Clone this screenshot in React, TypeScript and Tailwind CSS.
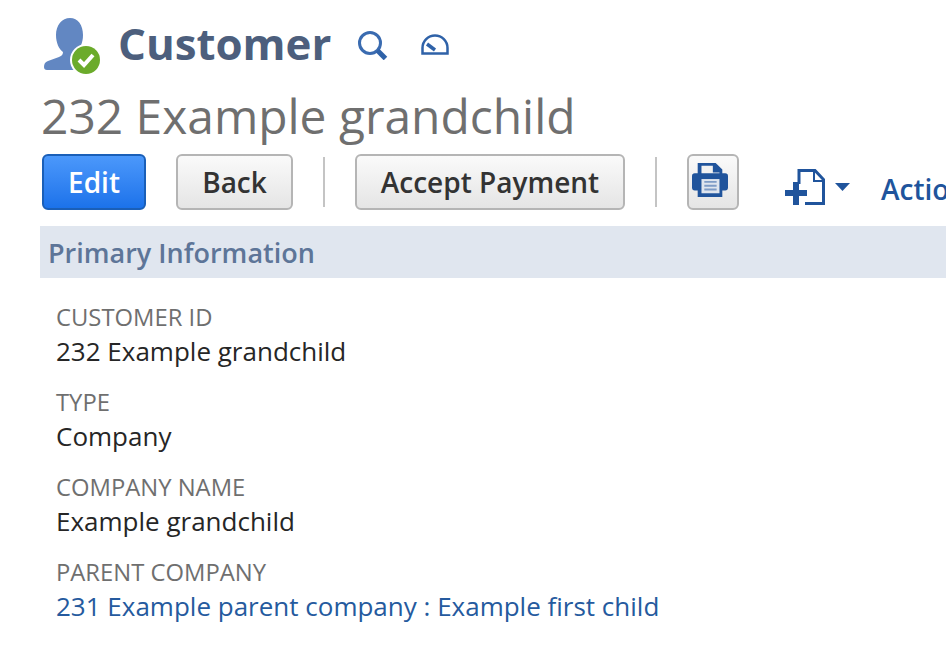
import type { ReactNode } from "react";

const fields: Array<{ label: string; value: string; link?: boolean }> = [
  { label: "CUSTOMER ID", value: "232 Example grandchild" },
  { label: "TYPE", value: "Company" },
  { label: "COMPANY NAME", value: "Example grandchild" },
  {
    label: "PARENT COMPANY",
    value: "231 Example parent company : Example first child",
    link: true,
  },
];

const CustomerIcon = () => (
  <svg width="60" height="60" viewBox="0 0 60 60" className="shrink-0">
    <path
      d="M2 53c0-3 1-5 4-6l11-4c3-1 4-3 4-5-4-3-7-9-7-17C14 11 20 4 28 4s13 7 13 17c0 8-3 14-7 17 0 3 2 4 6 6l8 4v8H5c-2 0-3-1-3-3z"
      fill="#6287c2"
    />
    <circle cx="44" cy="46" r="16" fill="#fff" />
    <circle cx="44" cy="46" r="14" fill="#6bab2b" />
    <path
      d="M37 46l5 5 9-10"
      fill="none"
      stroke="#fff"
      strokeWidth="4"
    />
  </svg>
);

const SearchIcon = () => (
  <svg width="32" height="32" viewBox="0 0 32 32">
    <circle cx="13" cy="15" r="10.500" fill="none" stroke="#3a6bb0" strokeWidth="3" />
    <path d="M20.500 22.500l8 8" stroke="#2f62a8" strokeWidth="5" />
  </svg>
);

const GaugeIcon = () => (
  <svg width="28" height="21" viewBox="0 0 28 21">
    <path
      d="M1.500 19.500V14a12.500 12.500 0 0 1 25 0v5.500z"
      fill="none"
      stroke="#2f62a8"
      strokeWidth="2.500"
    />
    <path d="M6 10l8 6" stroke="#2f62a8" strokeWidth="3.500" />
  </svg>
);

const PrinterIcon = () => (
  <svg width="38" height="36" viewBox="0 0 40 38">
    <path d="M7 1h19l7 7v10H7z" fill="#20549c" />
    <path d="M11 4h12v7h7v7H11z" fill="#f2f2f2" />
    <path d="M1 15q0-3 3-3h32q3 0 3 3v12q0 3-3 3h-3v7H7v-7H4q-3 0-3-3z" fill="#20549c" />
    <path d="M11 18h19v15H11z" fill="#dfe5ee" />
    <path d="M14 21h13M14 25h13M14 29h13" stroke="#7f9cc6" strokeWidth="2" />
  </svg>
);

const NewRecordIcon = () => (
  <svg width="66" height="36" viewBox="0 0 66 36">
    <path
      d="M14 15V1.500h16l8.500 9v24H20"
      fill="none"
      stroke="#20549c"
      strokeWidth="3"
    />
    <path d="M29 2v10h10" fill="none" stroke="#20549c" strokeWidth="2" />
    <path d="M0 24h22M11 13v23" stroke="#20549c" strokeWidth="6" />
    <path d="M50 14h15l-7.500 8z" fill="#20549c" />
  </svg>
);

const Button = ({ children, width }: { children: ReactNode; width: string }) => (
  <button
    className={`flex h-14 shrink-0 items-center justify-center rounded-md border-2 border-[#b5b5b5] bg-gradient-to-b from-[#fafafa] to-[#e5e5e5] text-[28px] font-semibold text-[#333] ${width}`}
  >
    {children}
  </button>
);

const Divider = () => (
  <div className="mx-[30px] h-[50px] w-0.5 shrink-0 bg-[#c4c4c4]" />
);

export default function App() {
  return (
    <div
      className="h-[656px] w-[946px] overflow-hidden bg-white"
      style={{ fontFamily: '"Open Sans", sans-serif' }}
    >
      <div className="flex h-[88px] items-center pl-[42px]">
        <CustomerIcon />
        <h1 className="ml-4 text-[43.800px] leading-none font-bold text-[#4d5f7d]">
          Customer
        </h1>
        <div className="ml-[26px] flex items-center gap-8">
          <SearchIcon />
          <GaugeIcon />
        </div>
      </div>
      <h2 className="ml-[41px] text-[47.900px] leading-[56px] text-[#6f6f6f]">
        232 Example grandchild
      </h2>
      <div className="mt-[10px] flex items-center pl-[42px] whitespace-nowrap">
        <button className="flex h-14 w-[104px] shrink-0 items-center justify-center rounded-md border-2 border-[#1a5fb8] bg-gradient-to-b from-[#4b98fb] to-[#1b72ea] text-[28px] font-semibold text-white">
          Edit
        </button>
        <div className="ml-[30px] shrink-0">
          <Button width="w-[117px]">Back</Button>
        </div>
        <Divider />
        <Button width="w-[270px]">Accept Payment</Button>
        <Divider />
        <button className="flex h-14 w-[52px] shrink-0 items-center justify-center rounded-md border-2 border-[#b5b5b5] bg-gradient-to-b from-[#fafafa] to-[#e5e5e5] pr-[6px] pb-1">
          <PrinterIcon />
        </button>
        <div className="mt-[10px] ml-[46px] flex shrink-0 items-center">
          <NewRecordIcon />
        </div>
        <span className="mt-[14px] ml-[30px] shrink-0 text-[28px] font-semibold text-[#20549c]">
          Actions
        </span>
      </div>
      <div className="mt-4 ml-10 flex h-[52px] items-center bg-[#e0e6ef] pt-0.5 pl-2 text-[27px] font-semibold text-[#5d7598]">
        Primary Information
      </div>
      <dl className="mt-[21px] ml-14 flex flex-col gap-[15px]">
        {fields.map((field) => (
          <div key={field.label}>
            <dt className="h-[35px] pt-px text-[23.800px] leading-[35px] text-[#6f6f6f]">
              {field.label}
            </dt>
            <dd
              className={`text-[26px] leading-[35px] ${
                field.link ? "text-[#255a9e]" : "text-[#262626]"
              }`}
            >
              {field.value}
            </dd>
          </div>
        ))}
      </dl>
    </div>
  );
}
